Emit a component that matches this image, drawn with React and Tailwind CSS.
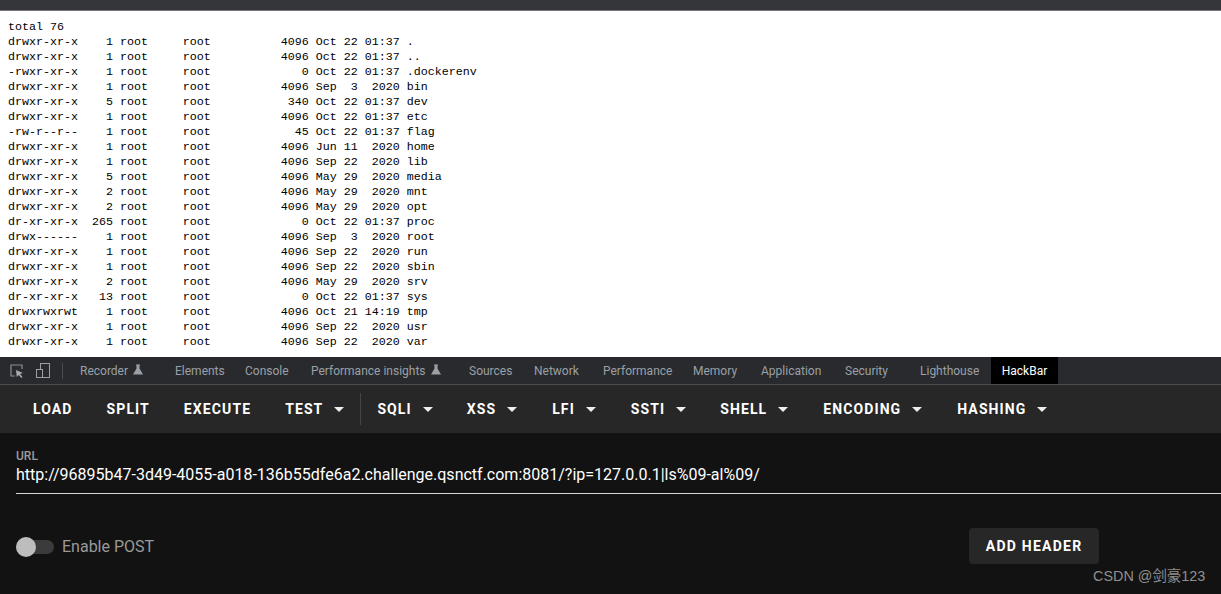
const listing = `total 76
drwxr-xr-x    1 root     root          4096 Oct 22 01:37 .
drwxr-xr-x    1 root     root          4096 Oct 22 01:37 ..
-rwxr-xr-x    1 root     root             0 Oct 22 01:37 .dockerenv
drwxr-xr-x    1 root     root          4096 Sep  3  2020 bin
drwxr-xr-x    5 root     root           340 Oct 22 01:37 dev
drwxr-xr-x    1 root     root          4096 Oct 22 01:37 etc
-rw-r--r--    1 root     root            45 Oct 22 01:37 flag
drwxr-xr-x    1 root     root          4096 Jun 11  2020 home
drwxr-xr-x    1 root     root          4096 Sep 22  2020 lib
drwxr-xr-x    5 root     root          4096 May 29  2020 media
drwxr-xr-x    2 root     root          4096 May 29  2020 mnt
drwxr-xr-x    2 root     root          4096 May 29  2020 opt
dr-xr-xr-x  265 root     root             0 Oct 22 01:37 proc
drwx------    1 root     root          4096 Sep  3  2020 root
drwxr-xr-x    1 root     root          4096 Sep 22  2020 run
drwxr-xr-x    1 root     root          4096 Sep 22  2020 sbin
drwxr-xr-x    2 root     root          4096 May 29  2020 srv
dr-xr-xr-x   13 root     root             0 Oct 22 01:37 sys
drwxrwxrwt    1 root     root          4096 Oct 21 14:19 tmp
drwxr-xr-x    1 root     root          4096 Sep 22  2020 usr
drwxr-xr-x    1 root     root          4096 Sep 22  2020 var`;

const Flask = () => (
  <svg width="10" height="11" viewBox="0 0 10 11" className="ml-[5px] mb-[2px]">
    <path d="M3 0.5h4v1H6.5v3L10 10.5H0L3.5 4.5v-3H3z" fill="#9aa0a6" />
  </svg>
);

const tabs = [
  ["Recorder", "w-[95px]", true],
  ["Elements", "w-[70px]"],
  ["Console", "w-[66px]"],
  ["Performance insights", "w-[158px]", true],
  ["Sources", "w-[65px]"],
  ["Network", "w-[69px]"],
  ["Performance", "w-[90px]"],
  ["Memory", "w-[68px]"],
  ["Application", "w-[84px]"],
  ["Security", "w-[75px]"],
  ["Lighthouse", "w-[71px]"],
];

const Caret = () => (
  <svg width="10" height="5" viewBox="0 0 10 5" className="ml-[11px]">
    <path d="M0 0h10L5 5z" fill="#eeeeee" />
  </svg>
);

const Btn = ({ label, caret, cls = "" }) => (
  <button className={`flex items-center h-9 px-4 text-[14px] font-bold tracking-[1.1px] text-white ${cls}`}>
    {label}
    {caret && <Caret />}
  </button>
);

export default function App() {
  return (
    <div className="w-[1221px] h-[594px] overflow-hidden relative flex flex-col bg-white font-['Roboto',sans-serif]">
      <div className="h-[11px] shrink-0 bg-[#35363a] border-b border-b-[#77787b]" />
      <pre className="h-[346px] shrink-0 pt-[9px] pl-2 bg-white text-black font-['Liberation_Mono',monospace] text-[11.67px] leading-[15px] overflow-hidden">
        {listing}
      </pre>

      <div className="h-[28px] shrink-0 flex items-center bg-[#292a2d] border-b border-b-[#494c50] text-[12px] text-[#9aa0a6] font-['Roboto',sans-serif]">
        <svg width="16" height="16" viewBox="0 0 16 16" className="ml-[9px] shrink-0" fill="none">
          <path d="M6 13H2V2h11v4" stroke="#8a8f94" strokeWidth="1.2" />
          <path d="M7 7l7 3-3 1 2.5 3-1.2 1-2.5-3-2 2z" fill="#a7abb0" />
        </svg>
        <svg width="16" height="16" viewBox="0 0 16 16" className="ml-[10px] shrink-0" fill="none">
          <rect x="5.5" y="0.5" width="9" height="14" stroke="#9aa0a6" />
          <rect x="1.5" y="6.5" width="6" height="8" fill="#292a2d" stroke="#9aa0a6" />
        </svg>
        <div className="w-px h-4 ml-[11px] mr-[17px] bg-[#494c50] shrink-0" />
        {tabs.map(([t, w, f]) => (
          <div key={t} className={`${w} shrink-0 flex items-center whitespace-nowrap`}>
            {t}
            {f && <Flask />}
          </div>
        ))}
        <div className="w-[67px] h-full shrink-0 flex items-center justify-center bg-black text-white">HackBar</div>
      </div>

      <div className="h-[48px] shrink-0 flex items-center pl-[17px] bg-[#272727]">
        <Btn label="LOAD" />
        <Btn label="SPLIT" cls="ml-[2px]" />
        <Btn label="EXECUTE" cls="ml-[2px]" />
        <Btn label="TEST" caret cls="ml-[2px]" />
        <div className="w-px h-8 bg-[#444444]" />
        <Btn label="SQLI" caret />
        <Btn label="XSS" caret cls="ml-[2px]" />
        <Btn label="LFI" caret cls="ml-[3px]" />
        <Btn label="SSTI" caret cls="ml-[3px]" />
        <Btn label="SHELL" caret cls="ml-[2px]" />
        <Btn label="ENCODING" caret cls="ml-[3px]" />
        <Btn label="HASHING" caret cls="ml-[3px]" />
      </div>

      <div className="flex-1 bg-[#121212] pt-4 pl-4">
        <div className="text-[12px] leading-[14px] font-medium text-[#9c9c9c]">URL</div>
        <div className="mt-[1px] h-[30px] border-b border-b-[#d6d6d6] text-[16px] leading-[22px] text-white whitespace-nowrap">
          http://96895b47-3d49-4055-a018-136b55dfe6a2.challenge.qsnctf.com:8081/?ip=127.0.0.1|ls%09-al%09/
        </div>
        <div className="mt-[35px] h-9 flex items-center">
          <div className="relative w-[38px] h-[14px] rounded-full bg-[#3b3b3b] shrink-0">
            <div className="absolute -top-[3px] left-0 w-5 h-5 rounded-full bg-[#bdbdbd]" />
          </div>
          <span className="ml-2 text-[16px] text-[#9a9a9a]">Enable POST</span>
          <button className="ml-[815px] w-[130px] h-9 -mt-[2px] rounded bg-[#272727] text-[14px] font-bold tracking-[1.25px] text-white">
            ADD HEADER
          </button>
        </div>
      </div>

      <div className="absolute left-[1093px] top-[567px] text-[14.4px] leading-[18px] text-[#8f8f8f] whitespace-nowrap font-['Liberation_Sans','Noto_Sans_CJK_SC',sans-serif]">
        CSDN @剑豪123
      </div>
    </div>
  );
}
